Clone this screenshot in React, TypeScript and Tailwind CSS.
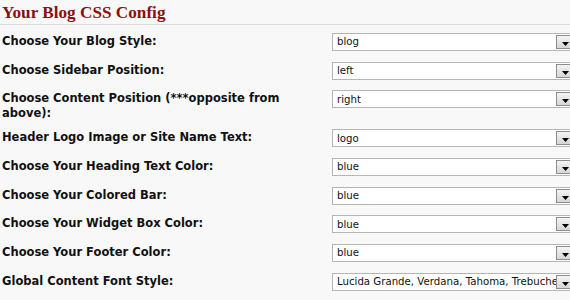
const rows = [
  { label: "Choose Your Blog Style:", value: "blog" },
  { label: "Choose Sidebar Position:", value: "left" },
  { label: "Choose Content Position (***opposite from above):", value: "right" },
  { label: "Header Logo Image or Site Name Text:", value: "logo" },
  { label: "Choose Your Heading Text Color:", value: "blue" },
  { label: "Choose Your Colored Bar:", value: "blue" },
  { label: "Choose Your Widget Box Color:", value: "blue" },
  { label: "Choose Your Footer Color:", value: "blue" },
  { label: "Global Content Font Style:", value: "Lucida Grande, Verdana, Tahoma, Trebuchet MS" },
];

function FakeSelect({ value }: { value: string }) {
  return (
    <div className="relative flex h-[18px] w-[250px] shrink-0 items-center overflow-hidden border border-[#b5b5b5] bg-white">
      <span className="whitespace-nowrap pl-[4px] font-['DejaVu_Sans',sans-serif] text-[10.2px] text-[#111]">{value}</span>
      <span className="absolute top-px left-[223px] flex h-[14px] w-[18px] items-end justify-center border border-[#8c8c8c] bg-gradient-to-b from-[#f4f4f4] to-[#d6d6d6] pb-[2px]">
        <svg width="7" height="4" viewBox="0 0 7 4"><path d="M0 0h7L3.5 4z" fill="#000" /></svg>
      </span>
    </div>
  );
}

export default function App() {
  return (
    <div className="h-[300px] w-[570px] overflow-hidden bg-[#f8f8f8]">
      <h1 className="h-[24px] pl-[2px] pt-[3px] font-['Liberation_Serif',serif] text-[17.2px] leading-[20px] font-bold text-[#8b1010]">Your Blog CSS Config</h1>
      <div className="h-px bg-[#dcdcdc]" />
      <div className="pt-[8px]">
        {rows.map((row) => (
          <div key={row.label} className="flex min-h-[28.7px] items-start pb-[8px]">
            <div className="mr-[32px] w-[300px] shrink-0 pl-[2px] pt-[1px] font-['DejaVu_Sans',sans-serif] text-[11.5px] leading-[15px] font-bold text-[#111]">{row.label}</div>
            <FakeSelect value={row.value} />
          </div>
        ))}
      </div>
    </div>
  );
}
